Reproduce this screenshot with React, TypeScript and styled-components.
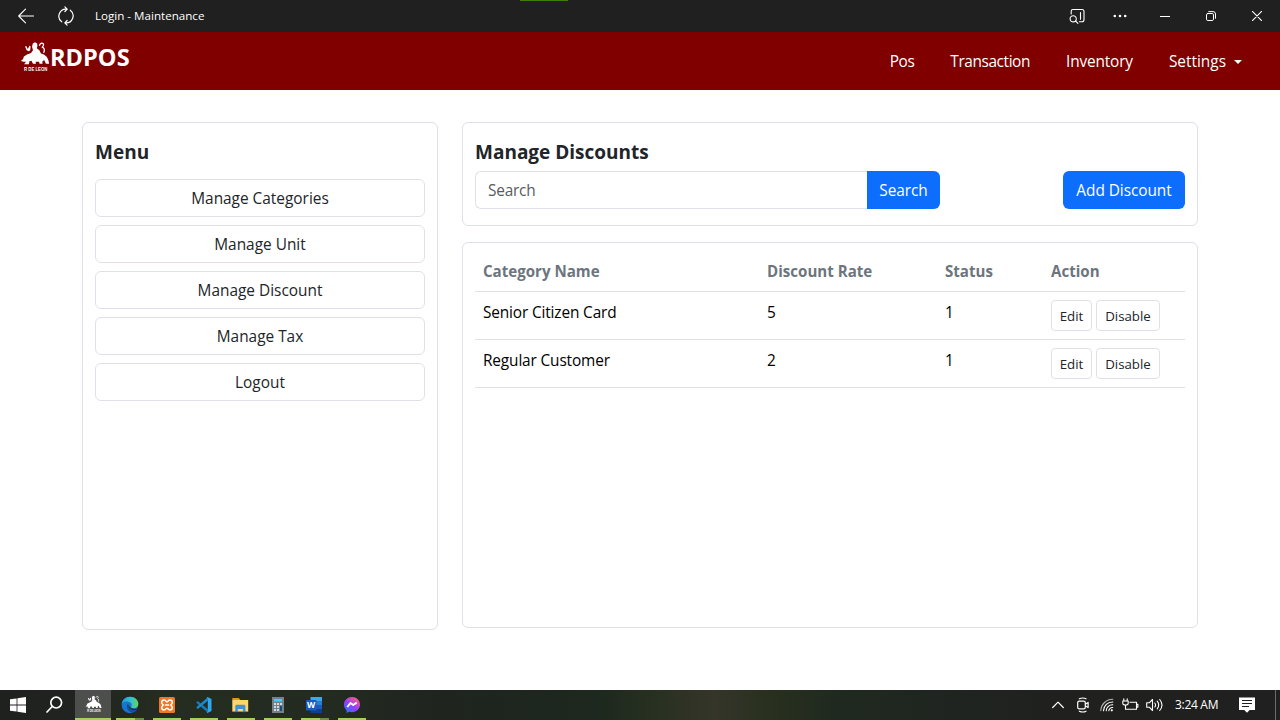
import React from "react";
import styled, { createGlobalStyle } from "styled-components";

const GlobalStyle = createGlobalStyle`
  *, *::before, *::after { box-sizing: border-box; }
  body {
    margin: 0;
    background: #fff;
    font-family: "Segoe UI", "Open Sans", "Noto Sans", sans-serif;
    font-size: 15.4px;
    line-height: 24px;
    color: #212529;
    overflow: hidden;
  }
  button, input { font: inherit; }
  svg { display: block; flex: none; }
`;

const Screen = styled.div`
  width: 1280px;
  height: 720px;
  display: flex;
  flex-direction: column;
  position: relative;
`;

const AccentLine = styled.div`
  position: absolute;
  top: 0;
  left: 520px;
  width: 48px;
  height: 1px;
  background: #3f7d0c;
`;

const TitleBar = styled.header`
  height: 32px;
  background: #202020;
  color: #fff;
  display: flex;
  align-items: center;
  padding-left: 18px;
`;

const WindowTitle = styled.span`
  flex: 1;
  font-size: 11.6px;
  line-height: 16px;
`;

const WindowControls = styled.div`
  display: flex;
  align-items: center;
`;

const Control = styled.span<{ $w: number }>`
  width: ${(p) => p.$w}px;
  display: flex;
  justify-content: center;
`;

const RefreshSlot = styled.span`
  width: 61px;
  padding-left: 23px;
`;

const NavBar = styled.nav`
  height: 58px;
  background: #800000;
  color: #fff;
  display: flex;
  justify-content: space-between;
  padding: 9px 38px 0 20px;
`;

const Brand = styled.div`
  display: flex;
  height: 32px;
  font-size: 23.6px;
  font-weight: 700;
  line-height: 33px;
`;

const NavLinks = styled.div`
  display: flex;
  align-items: center;
  height: 42px;
  gap: 36px;
`;

const NavLink = styled.a<{ $track?: number }>`
  display: flex;
  align-items: center;
  letter-spacing: ${(p) => p.$track ?? 0}px;
`;

const Caret = styled.i`
  margin-left: 8px;
  border: 4px solid transparent;
  border-top-color: #fff;
  border-bottom: 0;
`;

const Main = styled.main`
  flex: 1;
  background: #fff;
  padding: 32px 82px 0;
  display: grid;
  grid-template-columns: 356px 736px;
  gap: 24px;
  align-items: start;
`;

const Card = styled.section<{ $h: number; $top?: number }>`
  height: ${(p) => p.$h}px;
  padding: ${(p) => p.$top ?? 17}px 12px 0;
  border: 1px solid #dee2e6;
  border-radius: 6px;
`;

const Heading = styled.h1<{ $gap: number }>`
  margin: 0 0 ${(p) => p.$gap}px;
  font-size: 19px;
  line-height: 24px;
  font-weight: 700;
`;

const MenuList = styled.div`
  display: flex;
  flex-direction: column;
  gap: 8px;
`;

const Column = styled.div`
  display: flex;
  flex-direction: column;
  gap: 16px;
`;

const MenuButton = styled.button`
  height: 38px;
  padding: 2px 0 0;
  border: 1px solid #dee2e6;
  border-radius: 6px;
  background: #fff;
  color: #212529;
`;

const SmallButton = styled.button<{ $w: number }>`
  width: ${(p) => p.$w}px;
  height: 31px;
  padding: 2px 0 0;
  border: 1px solid #dee2e6;
  border-radius: 4px;
  background: #fff;
  color: #212529;
  font-size: 13.3px;
  line-height: 21px;
`;

const Toolbar = styled.div`
  display: flex;
  justify-content: space-between;
`;

const SearchGroup = styled.div`
  display: flex;
`;

const SearchInput = styled.input`
  width: 392px;
  height: 38px;
  padding: 0 12px;
  border: 1px solid #dee2e6;
  border-right: 0;
  border-radius: 6px 0 0 6px;
  outline: 0;
  letter-spacing: -0.2px;
  &::placeholder { color: #595c5f; opacity: 1; }
`;

const PrimaryButton = styled.button<{ $w: number; $attached?: boolean }>`
  width: ${(p) => p.$w}px;
  height: 38px;
  padding: 2px 0 0;
  border: 0;
  border-radius: ${(p) => (p.$attached ? "0 6px 6px 0" : "6px")};
  background: #0d6efd;
  color: #fff;
  letter-spacing: -0.05px;
`;

const Table = styled.table`
  width: 710px;
  table-layout: fixed;
  border-collapse: separate;
  border-spacing: 0;
  color: #000;
`;

const HeadCell = styled.th<{ $w: number }>`
  width: ${(p) => p.$w}px;
  height: 41px;
  padding: 8px;
  text-align: left;
  color: #6c757d;
  font-weight: 700;
  font-size: 15.1px;
  border-bottom: 1px solid #dee2e6;
`;

const Cell = styled.td`
  height: 48px;
  padding: 9px 8px 7px;
  vertical-align: top;
  letter-spacing: -0.14px;
  border-bottom: 1px solid #dee2e6;
`;

const ActionCell = styled(Cell)`
  padding: 8px;
  letter-spacing: 0;
`;

const Actions = styled.div`
  display: flex;
  gap: 4px;
`;

const TaskBar = styled.footer`
  height: 30px;
  display: flex;
  justify-content: space-between;
  background: linear-gradient(90deg, #1f211f 0, #20231f 70px, #252c20 160px, #232b20 330px,
    #1f241f 440px, #1d281e 600px, #273020 650px, #35352a 715px, #29301f 765px, #202a1f 830px,
    #1f2520 930px, #20211f 1050px, #1f201f 1280px);
`;

const TaskGroup = styled.div`
  display: flex;
`;

const TaskItem = styled.div<{ $w?: number; $active?: boolean }>`
  width: ${(p) => p.$w ?? 37}px;
  height: 30px;
  display: flex;
  flex-direction: column;
  align-items: center;
  justify-content: space-between;
  padding-top: 5px;
  background: ${(p) => (p.$active ? "#4c4f4c" : "transparent")};
`;

const Running = styled.div<{ $w: number; $stacked?: boolean }>`
  width: ${(p) => p.$w}px;
  height: 2px;
  background: ${(p) =>
    p.$stacked ? "linear-gradient(90deg, #9fd356 19px, #6d8f42 19px)" : "#9fd356"};
`;

const Tray = styled.div`
  display: flex;
  align-items: center;
  color: #fff;
`;

const TrayIcon = styled.span<{ $w: number }>`
  width: ${(p) => p.$w}px;
  display: flex;
  justify-content: center;
`;

const Clock = styled.span`
  width: 52px;
  margin-left: 8px;
  font-size: 12px;
  letter-spacing: -0.3px;
  line-height: 16px;
  white-space: nowrap;
`;

const Notification = styled.span`
  margin-left: 12px;
  width: 36px;
  height: 30px;
  display: flex;
  align-items: center;
`;

const DesktopEdge = styled.span`
  height: 30px;
  width: 5px;
  border-left: 1px solid #6b6c6b;
`;

const Emblem = ({ size }: { size: number }) => (
  <svg width={size} height={size * 1.06} viewBox="0 0 30 32" fill="#fff">
    <path d="M5 5.600 6.200 5 7.800 8 9.400 4.800 10.600 5.400 10.200 9.200 8.800 10.400 6.600 9.400ZM.8 20.200 3 18.200 3.800 15.600 7 13.600 11 12 13 9.200 12 5.800 12.800 2.600 15 1.200 17.200 2.600 17.400 5.400 16.800 7.400 19.400 9.400 21 12.600 24 13.600 27 16.200 28.600 19.600 29.200 23 26 23 24.200 19 22.400 20.600 22.600 23 19.600 23 19 21 15.600 21 16 23 13 23 11.400 20 9.400 20.400 8.800 23.400 4 23.400 6 21 3.600 20.800Z" />
    <path d="M19.400 4.800Q20.400 1.600 22.600 2.400T22.400 6.200Q25.800 8 23.600 12" fill="none" stroke="#fff" strokeWidth="1.300" />
    <text x="4" y="30" fontSize="4.600" fontWeight="700" textLength="23.400" lengthAdjust="spacingAndGlyphs" fontFamily="Liberation Sans, sans-serif">R DE LEON</text>
  </svg>
);

const line = { fill: "none", stroke: "#fff", strokeLinecap: "round", strokeLinejoin: "round" } as const;

const BackIcon = () => (
  <svg width="16" height="16" viewBox="0 0 16 16" {...line} strokeWidth="1.1">
    <path d="M15.5 8H.7M7.5 1.2.7 8l6.8 6.8" />
  </svg>
);

const RefreshIcon = () => (
  <svg width="18" height="20" viewBox="0 0 18 20" {...line} strokeWidth="1.2">
    <path d="M4.700 15.800A7.100 7.100 0 0 1 9.800 3.100M7.900.9l2.300 2.300-2.300 2.300" />
    <path d="M4.700 15.800A7.100 7.100 0 0 1 9.800 3.100M7.900.9l2.300 2.300-2.300 2.300" transform="rotate(180 9 10)" />
  </svg>
);

const SearchPaneIcon = () => (
  <svg width="16" height="16" viewBox="0 0 16 16" {...line} strokeWidth="1.1">
    <path d="M2.2 6V3.2Q2.2 1.500 4 1.500h9q2 0 2 2v8.300q0 2-2 2h-2.600M11.500 4.500v6.800" />
    <circle cx="4.200" cy="10.800" r="3.100" />
    <path d="m6.600 13 2.300 2.300" />
  </svg>
);

const MoreIcon = () => (
  <svg width="14" height="4" viewBox="0 0 14 4" fill="#fff">
    <circle cx="1.8" cy="2" r="1.3" /><circle cx="7" cy="2" r="1.3" /><circle cx="12.2" cy="2" r="1.3" />
  </svg>
);

const MinimizeIcon = () => (
  <svg width="10" height="10" viewBox="0 0 10 10"><path d="M0 5h10v1H0z" fill="#fff" /></svg>
);

const RestoreIcon = () => (
  <svg width="10" height="10" viewBox="0 0 10 10" {...line}>
    <rect x=".5" y="2.5" width="7" height="7" rx="1.3" />
    <path d="M2.7.6h4.4q2.4 0 2.4 2.4v4.3" />
  </svg>
);

const CloseIcon = () => (
  <svg width="10" height="10" viewBox="0 0 10 10" {...line} strokeWidth="1.1"><path d="m.4.4 9.2 9.2M9.6.4.4 9.6" /></svg>
);

const WindowsIcon = () => (
  <svg width="16" height="20" viewBox="0 0 16 20" fill="#fff">
    <path d="M0 4.3 6.6 3.4v6.2H0zM7.4 3.3 16 2.1v7.5H7.4zM0 10.4h6.6v6.2L0 15.7zM7.4 10.4H16v7.5l-8.6-1.2z" />
  </svg>
);

const FindIcon = () => (
  <svg width="17" height="20" viewBox="0 0 17 20" {...line} strokeWidth="1.7">
    <circle cx="10.2" cy="7.6" r="5.4" /><path d="M6.2 11.5 1 17" />
  </svg>
);

const EdgeIcon = () => (
  <svg width="18" height="20" viewBox="0 0 18 20">
    <defs>
      <linearGradient id="edgeTop" x1="0" x2="1"><stop offset="0" stopColor="#1a9be0" /><stop offset=".55" stopColor="#35c1cf" /><stop offset="1" stopColor="#66d45a" /></linearGradient>
    </defs>
    <circle cx="8.8" cy="10" r="8.2" fill="#1676cf" />
    <path d="M.7 9C1.3 4.6 4.7 1.7 9 1.7c5 0 8.4 3.4 8.4 7.1 0 3-2.2 4.4-4.7 4.4-2 0-3-.8-2.4-1.7.8-1.2.8-3.5-2.1-4.6C5 5.700 1.800 6.800.7 9Z" fill="url(#edgeTop)" />
    <path d="M6.600 8.800c-1.800 3.300.4 7.500 4 8.400 2.600.3 4.600-.8 5.700-2.400-4 1.500-8.500-1-9.700-6Z" fill="#124a99" />
    <path d="M8.300 8.300c-1.500 1.700.2 5 4.200 5.500 1.800.2 3.400-.2 4.500-.9l1.300.7-1.800 1.900c-4 1-8.200-.8-9-4.500q-.2-1.700.8-2.700Z" fill="#252c20" />
    <path d="M6.700 10.200c.5 3.300 4.500 5.600 9.500 4.400-1.500 2.300-4 3-6 2.600-2.800-.8-4.700-4-3.500-7Z" fill="#1350a5" />
  </svg>
);

const XamppIcon = () => (
  <svg width="16" height="20" viewBox="0 0 16 20">
    <rect y="2" width="16" height="16" rx="1.5" fill="#f37623" />
    <path d="M5 5.100C3 5.100 2.700 6.300 2.700 7.500S3.700 9.400 4.200 10c-.5.600-1.500 1.300-1.500 2.500s.3 2.400 2.300 2.400S7 13.200 8 13.200s1 1.700 3 1.700 2.300-1.200 2.300-2.400-1-1.900-1.500-2.500c.5-.6 1.500-1.300 1.500-2.500s-.3-2.400-2.300-2.400S9 6.800 8 6.800 7 5.100 5 5.100ZM5.800 10h4.400" fill="none" stroke="#fff" strokeWidth="1.500" />
  </svg>
);

const CodeIcon = () => (
  <svg width="16" height="20" viewBox="0 0 16 20">
    <path d="M.4 7.200 1.800 6l10.100 8.200v3.500L.5 8z" fill="#1579bd" />
    <path d="M.4 12.800 1.800 14l10.100-8.200V2.300L.5 12z" fill="#1689d0" />
    <path d="m11.500 2 4 1.900v12.200l-4 1.900-.9-.7 1.200-.8V3.500l-1.200-.8z" fill="#2ba9f2" />
  </svg>
);

const FolderIcon = () => (
  <svg width="17" height="20" viewBox="0 0 17 20">
    <path d="M.3 3h6.500l1.500 2H.3z" fill="#e09a12" />
    <path d="M.3 5h15.900v11.600H.3z" fill="#ffd667" />
    <path d="M3.300 17V11q0-1.300 1.300-1.300h7.500q1.300 0 1.300 1.300v6h-2.500v-3H5.800v3z" fill="#3a94df" />
    <path d="M2.800 16.600h2.800v.7H2.800zM11 16.600h2.800v.7H11z" fill="#1769af" />
  </svg>
);

const CalculatorIcon = () => (
  <svg width="12" height="20" viewBox="0 0 12 20">
    <path d="M0 2h12v16H0z" fill="#74818a" /><path d="M2 4h8v2.500H2z" fill="#44d0f4" />
    <path d="M2 8h2v2H2zM5 8h2v2H5zM8 8h2v2H8zM2 11h2v2H2zM5 11h2v2H5zM2 14h2v2H2zM5 14h2v2H5z" fill="#d5dade" />
    <path d="M8 11h2v5H8z" fill="#154d83" />
  </svg>
);

const WordIcon = () => (
  <svg width="17" height="20" viewBox="0 0 17 20">
    <path d="M4.500 2H16v4H4.500z" fill="#41a5ee" /><path d="M4.500 6H16v4H4.500z" fill="#2b7cd3" />
    <path d="M4.500 10H16v4H4.500z" fill="#185abd" /><path d="M4.500 14H16v4H4.500z" fill="#103f91" />
    <rect y="5" width="10.500" height="10.500" rx="1" fill="#185abd" />
    <text x="5.200" y="13.400" textAnchor="middle" fontSize="8.500" fontWeight="700" fill="#fff" fontFamily="Open Sans, sans-serif">W</text>
  </svg>
);

const MessengerIcon = () => (
  <svg width="16" height="20" viewBox="0 0 16 20">
    <defs>
      <linearGradient id="chat" x1=".1" y1="1" x2=".8" y2="0"><stop offset="0" stopColor="#147cff" /><stop offset=".5" stopColor="#9a3cff" /><stop offset="1" stopColor="#ff6275" /></linearGradient>
    </defs>
    <path d="M8 2C3.500 2 0 5.300 0 9.600c0 2.300 1 4.200 2.500 5.600V18l2.700-1.200c.9.300 1.800.4 2.800.4 4.500 0 8-3.200 8-7.600S12.500 2 8 2Z" fill="url(#chat)" />
    <path d="m3.300 12 3.200-4 2.700 2 3.500-2.400" fill="none" stroke="#fff" strokeWidth="1.900" strokeLinejoin="round" />
  </svg>
);

const ChevronUpIcon = () => (
  <svg width="12" height="8" viewBox="0 0 12 8" {...line} strokeWidth="1.200"><path d="M.7 6.500 6 1.200l5.300 5.300" /></svg>
);

const MeetIcon = () => (
  <svg width="12" height="16" viewBox="0 0 12 16" {...line} strokeWidth="1.200">
    <rect x=".7" y="4.200" width="7.600" height="7.600" rx="1.600" />
    <path d="M8.500 7l2.600-1.600v5.200L8.500 9M2.300 1.800Q6 .2 9 1.800M2.300 14.200q3.700 1.600 6.700 0" />
  </svg>
);

const WifiIcon = () => (
  <svg width="14" height="14" viewBox="0 0 14 14" {...line} strokeWidth="1.100">
    <path d="M.8 12.600A12 12 0 0 1 12.800 1.200" opacity=".65" />
    <path d="M3.500 12.800a9 9 0 0 1 9.300-8.800M6.200 12.800a6.300 6.300 0 0 1 6.600-6M8.800 12.800a3.600 3.600 0 0 1 4-3.300" />
    <circle cx="11.800" cy="12.300" r="1.100" fill="#fff" stroke="none" />
  </svg>
);

const BatteryIcon = () => (
  <svg width="17" height="14" viewBox="0 0 17 14" {...line} strokeWidth="1.100">
    <path d="M1.800.8v2M5.200.8v2M.8 3h5.400v2.200Q6.200 7 3.500 7 .8 7 .8 5.200zM3.500 7v4.300h11V4.200H8M14.500 6.400h1.400v2.700h-1.400" />
  </svg>
);

const VolumeIcon = () => (
  <svg width="18" height="14" viewBox="0 0 18 14" {...line} strokeWidth="1.100">
    <path d="M.7 4.800h2.600L6.500 1.500v11L3.300 9.200H.7zM8.800 5q1.600 2 0 4M11.200 3.200q3 3.800 0 7.600M13.700 1.500q4.600 5.500 0 11" />
  </svg>
);

const NoteIcon = () => (
  <svg width="16" height="16" viewBox="0 0 16 16">
    <path d="M0 .5h16V13H10.700L8 15.800 5.300 13H0z" fill="#fff" />
    <path d="M3 3.500h10M3 6.500h10M3 9.500h7" stroke="#20211f" strokeWidth="1" />
  </svg>
);

const menuItems = ["Manage Categories", "Manage Unit", "Manage Discount", "Manage Tax", "Logout"];

const discounts = [
  { name: "Senior Citizen Card", rate: 5, status: 1 },
  { name: "Regular Customer", rate: 2, status: 1 },
];

const apps = [
  { id: "edge", Icon: EdgeIcon, stacked: true },
  { id: "xampp", Icon: XamppIcon },
  { id: "code", Icon: CodeIcon },
  { id: "files", Icon: FolderIcon },
  { id: "calculator", Icon: CalculatorIcon },
  { id: "word", Icon: WordIcon, stacked: true },
  { id: "messenger", Icon: MessengerIcon },
];

export default function App() {
  return (
    <Screen>
      <GlobalStyle />
      <TitleBar>
        <BackIcon />
        <RefreshSlot><RefreshIcon /></RefreshSlot>
        <WindowTitle>Login - Maintenance</WindowTitle>
        <WindowControls>
          <Control $w={42}><SearchPaneIcon /></Control>
          <Control $w={44}><MoreIcon /></Control>
          <Control $w={46}><MinimizeIcon /></Control>
          <Control $w={46}><RestoreIcon /></Control>
          <Control $w={46}><CloseIcon /></Control>
        </WindowControls>
      </TitleBar>
      <AccentLine />
      <NavBar>
        <Brand><Emblem size={30} />RDPOS</Brand>
        <NavLinks>
          <NavLink $track={-0.4}>Pos</NavLink>
          <NavLink $track={-0.4}>Transaction</NavLink>
          <NavLink $track={-0.15}>Inventory</NavLink>
          <NavLink>Settings<Caret /></NavLink>
        </NavLinks>
      </NavBar>
      <Main>
        <Card $h={508}>
          <Heading $gap={15}>Menu</Heading>
          <MenuList>
            {menuItems.map((item) => <MenuButton key={item}>{item}</MenuButton>)}
          </MenuList>
        </Card>
        <Column>
          <Card $h={104}>
            <Heading $gap={7}>Manage Discounts</Heading>
            <Toolbar>
              <SearchGroup>
                <SearchInput placeholder="Search" />
                <PrimaryButton $w={73} $attached>Search</PrimaryButton>
              </SearchGroup>
              <PrimaryButton $w={122}>Add Discount</PrimaryButton>
            </Toolbar>
          </Card>
          <Card $h={386} $top={8}>
            <Table>
              <thead>
                <tr>
                  <HeadCell $w={284}>Category Name</HeadCell>
                  <HeadCell $w={178}>Discount Rate</HeadCell>
                  <HeadCell $w={106}>Status</HeadCell>
                  <HeadCell $w={142}>Action</HeadCell>
                </tr>
              </thead>
              <tbody>
                {discounts.map((d) => (
                  <tr key={d.name}>
                    <Cell>{d.name}</Cell>
                    <Cell>{d.rate}</Cell>
                    <Cell>{d.status}</Cell>
                    <ActionCell>
                      <Actions>
                        <SmallButton $w={41}>Edit</SmallButton>
                        <SmallButton $w={64}>Disable</SmallButton>
                      </Actions>
                    </ActionCell>
                  </tr>
                ))}
              </tbody>
            </Table>
          </Card>
        </Column>
      </Main>
      <TaskBar>
        <TaskGroup>
          <TaskItem $w={36}><WindowsIcon /></TaskItem>
          <TaskItem $w={37}><FindIcon /></TaskItem>
          <TaskItem $w={2} />
          <TaskItem $w={36} $active><Emblem size={17} /><Running $w={36} /></TaskItem>
          {apps.map(({ id, Icon, stacked }) => (
            <TaskItem key={id}><Icon /><Running $w={28} $stacked={stacked} /></TaskItem>
          ))}
        </TaskGroup>
        <Tray>
          <TrayIcon $w={24}><ChevronUpIcon /></TrayIcon>
          <TrayIcon $w={25}><MeetIcon /></TrayIcon>
          <TrayIcon $w={24}><WifiIcon /></TrayIcon>
          <TrayIcon $w={23}><BatteryIcon /></TrayIcon>
          <TrayIcon $w={25}><VolumeIcon /></TrayIcon>
          <Clock>3:24 AM</Clock>
          <Notification><NoteIcon /></Notification>
          <DesktopEdge />
        </Tray>
      </TaskBar>
    </Screen>
  );
}
